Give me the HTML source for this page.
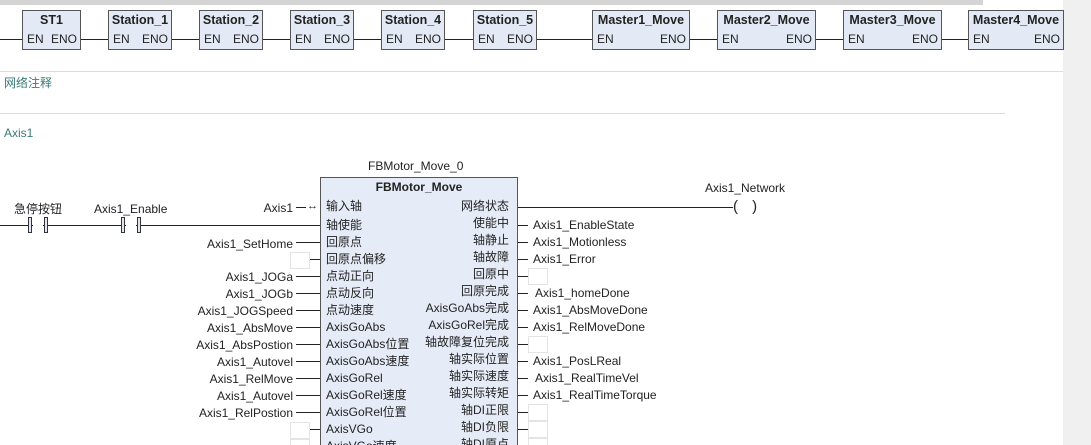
<!DOCTYPE html>
<html style="width:1091px;height:445px;overflow:hidden"><head><meta charset="utf-8"><style>
*{margin:0;padding:0;box-sizing:border-box}
body{width:1091px;height:445px;overflow:hidden;background:#fff;position:relative;font-family:"Liberation Sans","Noto Sans CJK SC",sans-serif;font-size:12px;color:#222}
.a{position:absolute;white-space:nowrap;line-height:14px}
.h{position:absolute;height:1px;background:#222}
.fb{position:absolute;top:10px;height:40px;background:#e3eaf5;border:1px solid #555}
.fb .t{position:absolute;top:2px;left:0;right:0;text-align:center;font-weight:bold;font-size:12.5px}
.fb .l{position:absolute;left:4px;top:21px}
.fb .r{position:absolute;right:3px;top:21px}
.e{position:absolute;width:20px;height:17px;border:1px solid #e4e4e4;background:#fff}
.L{position:absolute;right:798px;white-space:nowrap;line-height:14px}
.in{position:absolute;left:326px;line-height:14px;white-space:nowrap}
.out{position:absolute;right:582px;line-height:14px;white-space:nowrap}
.R{position:absolute;left:533px;line-height:14px;white-space:nowrap}
.bar{position:absolute;width:4px;height:16px;border:1px solid #333;background:#dfe7f2}
</style></head><body>
<div style="position:absolute;left:0;top:0;width:983px;height:5px;background:#d4d4d4"></div>
<div style="position:absolute;left:1063px;top:0;width:28px;height:445px;background:#f0f0f0"></div>

<div class="h" style="left:0;top:39px;width:1063px"></div>
<div class="fb" style="left:22px;width:59px"><div class="t">ST1</div><div class="l">EN</div><div class="r">ENO</div></div>
<div class="fb" style="left:108px;width:64px"><div class="t">Station_1</div><div class="l">EN</div><div class="r">ENO</div></div>
<div class="fb" style="left:199px;width:64px"><div class="t">Station_2</div><div class="l">EN</div><div class="r">ENO</div></div>
<div class="fb" style="left:290px;width:64px"><div class="t">Station_3</div><div class="l">EN</div><div class="r">ENO</div></div>
<div class="fb" style="left:381px;width:64px"><div class="t">Station_4</div><div class="l">EN</div><div class="r">ENO</div></div>
<div class="fb" style="left:473px;width:64px"><div class="t">Station_5</div><div class="l">EN</div><div class="r">ENO</div></div>
<div class="fb" style="left:592px;width:98px"><div class="t">Master1_Move</div><div class="l">EN</div><div class="r">ENO</div></div>
<div class="fb" style="left:717px;width:99px"><div class="t">Master2_Move</div><div class="l">EN</div><div class="r">ENO</div></div>
<div class="fb" style="left:843px;width:99px"><div class="t">Master3_Move</div><div class="l">EN</div><div class="r">ENO</div></div>
<div class="fb" style="left:968px;width:96px"><div class="t">Master4_Move</div><div class="l">EN</div><div class="r">ENO</div></div>

<div style="position:absolute;left:0;top:71px;width:1063px;height:1px;background:#ddd"></div>
<div class="a" style="left:4px;top:76px;color:#3a7a78">网络注释</div>
<div style="position:absolute;left:0;top:113px;width:1005px;height:1px;background:#ddd"></div>
<div class="a" style="left:4px;top:126px;color:#3a7a78">Axis1</div>

<div class="a" style="left:368px;top:159px">FBMotor_Move_0</div>
<div style="position:absolute;left:320px;top:177px;width:198px;height:270px;background:#e6ecf7;border:1px solid #555"></div>
<div class="a" style="left:320px;top:180px;width:198px;text-align:center;font-weight:bold">FBMotor_Move</div>

<div class="h" style="left:0;top:225px;width:320px"></div>
<div class="bar" style="left:28px;top:217px"></div><div class="bar" style="left:44px;top:217px"></div>
<div style="position:absolute;left:33px;top:217px;width:10px;height:16px;background:#fff"></div>
<div class="bar" style="left:121px;top:217px"></div><div class="bar" style="left:137px;top:217px"></div>
<div style="position:absolute;left:126px;top:217px;width:10px;height:16px;background:#fff"></div>
<div class="a" style="left:14px;top:202px">急停按钮</div>
<div class="a" style="left:94px;top:202px">Axis1_Enable</div>

<div class="L" style="top:201px">Axis1</div>
<div class="h" style="left:296px;top:207px;width:10px"></div>
<div class="a" style="left:307px;top:199px;font-size:11px">↔</div>

<div class="L" style="top:237px">Axis1_SetHome</div>
<div class="e" style="left:290px;top:252px"></div>
<div class="L" style="top:270px">Axis1_JOGa</div>
<div class="L" style="top:287px">Axis1_JOGb</div>
<div class="L" style="top:304px">Axis1_JOGSpeed</div>
<div class="L" style="top:321px">Axis1_AbsMove</div>
<div class="L" style="top:338px">Axis1_AbsPostion</div>
<div class="L" style="top:355px">Axis1_Autovel</div>
<div class="L" style="top:372px">Axis1_RelMove</div>
<div class="L" style="top:389px">Axis1_Autovel</div>
<div class="L" style="top:406px">Axis1_RelPostion</div>
<div class="e" style="left:290px;top:422px"></div>
<div class="e" style="left:290px;top:439px"></div>
<div class="h" style="left:296px;top:242px;width:24px"></div>
<div class="h" style="left:310px;top:259px;width:10px"></div>
<div class="h" style="left:296px;top:276px;width:24px"></div>
<div class="h" style="left:296px;top:293px;width:24px"></div>
<div class="h" style="left:296px;top:310px;width:24px"></div>
<div class="h" style="left:296px;top:327px;width:24px"></div>
<div class="h" style="left:296px;top:344px;width:24px"></div>
<div class="h" style="left:296px;top:361px;width:24px"></div>
<div class="h" style="left:296px;top:378px;width:24px"></div>
<div class="h" style="left:296px;top:395px;width:24px"></div>
<div class="h" style="left:296px;top:412px;width:24px"></div>
<div class="h" style="left:310px;top:429px;width:10px"></div>

<div class="in" style="top:199px">输入轴</div>
<div class="in" style="top:218px">轴使能</div>
<div class="in" style="top:235px">回原点</div>
<div class="in" style="top:252px">回原点偏移</div>
<div class="in" style="top:269px">点动正向</div>
<div class="in" style="top:286px">点动反向</div>
<div class="in" style="top:303px">点动速度</div>
<div class="in" style="top:320px">AxisGoAbs</div>
<div class="in" style="top:337px">AxisGoAbs位置</div>
<div class="in" style="top:354px">AxisGoAbs速度</div>
<div class="in" style="top:371px">AxisGoRel</div>
<div class="in" style="top:388px">AxisGoRel速度</div>
<div class="in" style="top:405px">AxisGoRel位置</div>
<div class="in" style="top:422px">AxisVGo</div>
<div class="in" style="top:439px">AxisVGo速度</div>

<div class="out" style="top:199px">网络状态</div>
<div class="out" style="top:216px">使能中</div>
<div class="out" style="top:233px">轴静止</div>
<div class="out" style="top:250px">轴故障</div>
<div class="out" style="top:267px">回原中</div>
<div class="out" style="top:284px">回原完成</div>
<div class="out" style="top:301px">AxisGoAbs完成</div>
<div class="out" style="top:318px">AxisGoRel完成</div>
<div class="out" style="top:335px">轴故障复位完成</div>
<div class="out" style="top:352px">轴实际位置</div>
<div class="out" style="top:369px">轴实际速度</div>
<div class="out" style="top:386px">轴实际转矩</div>
<div class="out" style="top:403px">轴DI正限</div>
<div class="out" style="top:420px">轴DI负限</div>
<div class="out" style="top:437px">轴DI原点</div>

<div class="h" style="left:518px;top:207px;width:215px"></div>
<div class="a" style="left:733px;top:198px;font-size:15px;line-height:18px;letter-spacing:5px">( )</div>
<div class="a" style="left:705px;top:181px">Axis1_Network</div>

<div class="h" style="left:518px;top:225px;width:10px"></div><div class="R" style="top:218px">Axis1_EnableState</div>
<div class="h" style="left:518px;top:242px;width:10px"></div><div class="R" style="top:235px">Axis1_Motionless</div>
<div class="h" style="left:518px;top:259px;width:10px"></div><div class="R" style="top:252px">Axis1_Error</div>
<div class="h" style="left:518px;top:276px;width:10px"></div><div class="e" style="left:528px;top:268px"></div>
<div class="h" style="left:518px;top:293px;width:10px"></div><div class="R" style="left:535px;top:286px">Axis1_homeDone</div>
<div class="h" style="left:518px;top:310px;width:10px"></div><div class="R" style="top:303px">Axis1_AbsMoveDone</div>
<div class="h" style="left:518px;top:327px;width:10px"></div><div class="R" style="top:320px">Axis1_RelMoveDone</div>
<div class="h" style="left:518px;top:344px;width:10px"></div><div class="e" style="left:528px;top:336px"></div>
<div class="h" style="left:518px;top:361px;width:10px"></div><div class="R" style="top:354px">Axis1_PosLReal</div>
<div class="h" style="left:518px;top:378px;width:10px"></div><div class="R" style="left:535px;top:371px">Axis1_RealTimeVel</div>
<div class="h" style="left:518px;top:395px;width:10px"></div><div class="R" style="top:388px">Axis1_RealTimeTorque</div>
<div class="h" style="left:518px;top:412px;width:10px"></div><div class="e" style="left:528px;top:404px"></div>
<div class="h" style="left:518px;top:429px;width:10px"></div><div class="e" style="left:528px;top:421px"></div>
<div class="e" style="left:528px;top:438px"></div>
</body></html>
